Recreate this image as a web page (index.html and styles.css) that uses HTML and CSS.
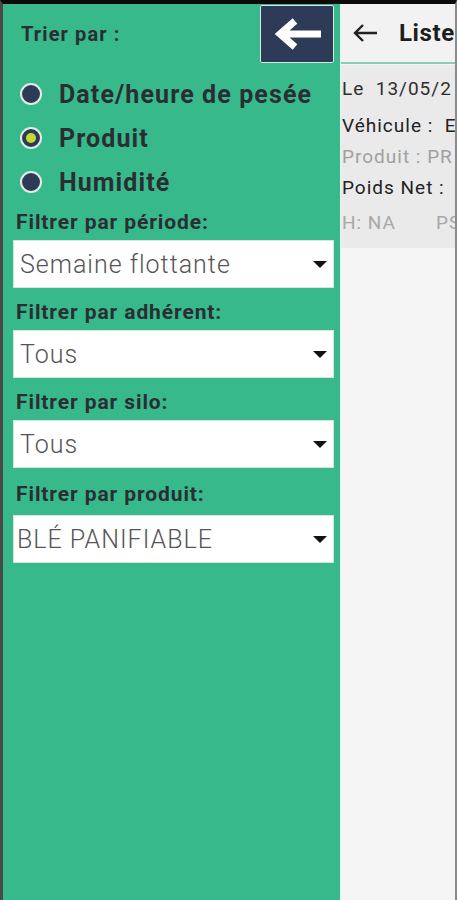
FILE: index.html
```html
<!DOCTYPE html>
<html lang="fr">
<head>
<meta charset="utf-8">
<link rel="stylesheet" href="styles.css">
</head>
<body>
<div class="frame">
  <aside class="panel">
    <div class="panel-top">
      <span class="sort-title">Trier par :</span>
      <button class="back-btn" aria-label="Retour">
        <svg width="52" height="32" viewBox="0 0 52 32"><path d="M50 16 H10 M24 3 L9 16 L24 29" fill="none" stroke="#fff" stroke-width="7" stroke-linejoin="miter"/></svg>
      </button>
    </div>
    <ul class="radios">
      <li class="radio-row"><span class="radio"></span><span class="radio-label">Date/heure de pesée</span></li>
      <li class="radio-row"><span class="radio checked"></span><span class="radio-label">Produit</span></li>
      <li class="radio-row"><span class="radio"></span><span class="radio-label">Humidité</span></li>
    </ul>
    <div class="filter">
      <div class="filter-label">Filtrer par période:</div>
      <div class="select"><span class="select-text">Semaine flottante</span><span class="caret"></span></div>
    </div>
    <div class="filter">
      <div class="filter-label">Filtrer par adhérent:</div>
      <div class="select"><span class="select-text">Tous</span><span class="caret"></span></div>
    </div>
    <div class="filter">
      <div class="filter-label">Filtrer par silo:</div>
      <div class="select"><span class="select-text">Tous</span><span class="caret"></span></div>
    </div>
    <div class="filter">
      <div class="filter-label">Filtrer par produit:</div>
      <div class="select"><span class="select-text prod">BLÉ PANIFIABLE</span><span class="caret"></span></div>
    </div>
  </aside>
  <main class="main">
    <header class="main-head">
      <svg class="head-arrow" width="26" height="20" viewBox="0 0 26 20"><path d="M25 10 H3 M11 2 L3 10 L11 18" fill="none" stroke="#222" stroke-width="2.4"/></svg>
      <span class="head-title">Liste</span>
    </header>
    <section class="card">
      <div class="line l1">Le&nbsp; 13/05/2</div>
      <div class="line l2">Véhicule :&nbsp; E</div>
      <div class="line l3">Produit : PR</div>
      <div class="line l4">Poids Net :</div>
      <div class="line l5">H: NA&nbsp;&nbsp;&nbsp;&nbsp;&nbsp;&nbsp; PS</div>
    </section>
  </main>
</div>
</body>
</html>
```
FILE: styles.css
```css
* { box-sizing: border-box; }
html, body { margin: 0; padding: 0; }
body {
  width: 457px;
  height: 900px;
  overflow: hidden;
  font-family: Roboto, "Liberation Sans", sans-serif;
  background: #f5f5f5;
}
.frame {
  display: flex;
  height: 900px;
  border-top: 4px solid #0a0a0a;
  border-left: 3px solid #4a4a4a;
  border-right: 2px solid #8a8a8a;
}
.panel {
  width: 337px;
  flex: none;
  background: #38b98c;
  padding: 0 6px 0 10px;
}
.panel-top {
  display: flex;
  align-items: center;
  justify-content: space-between;
  height: 59px;
  padding-top: 1px;
}
.sort-title {
  font-weight: 700;
  font-size: 20px;
  letter-spacing: 1.1px;
  color: #2a2e33;
  margin-left: 8px;
}
.back-btn {
  width: 74px;
  height: 58px;
  background: #2d3b58;
  border: 1px solid #d8e8e0;
  border-radius: 2px;
  display: flex;
  align-items: center;
  justify-content: center;
  padding: 0;
  margin-right: 0;
}
.radios {
  list-style: none;
  margin: 9px 0 0;
  padding: 0 0 0 7px;
}
.radio-row {
  display: flex;
  align-items: center;
  height: 44px;
}
.radio {
  width: 22px;
  height: 22px;
  border-radius: 50%;
  background: #2d3b58;
  border: 2px solid #e4ece6;
  display: flex;
  align-items: center;
  justify-content: center;
  margin-right: 17px;
}
.radio.checked::after {
  content: "";
  width: 10px;
  height: 10px;
  border-radius: 50%;
  background: #c5da2e;
}
.radio-label {
  font-size: 25px;
  font-weight: 700;
  letter-spacing: 1.1px;
  color: #2a2e33;
}
.filter-label {
  font-size: 21px;
  font-weight: 700;
  letter-spacing: 0.9px;
  color: #2a2e33;
  line-height: 20px;
  margin: 8px 0 8px 3px;
}
.filter + .filter .filter-label { margin-top: 14px; }
.filter:last-child .filter-label { margin-top: 16px; margin-bottom: 11px; }
.select {
  height: 48px;
  background: #fff;
  border: 1px solid #d6e4dc;
  display: flex;
  align-items: center;
  justify-content: space-between;
  padding: 0 6px 0 6px;
}
.select-text {
  font-size: 25px;
  font-weight: 300;
  letter-spacing: 1px;
  color: #555;
}
.select-text.prod { margin-left: -3px; }
.caret {
  width: 0;
  height: 0;
  border-left: 7px solid transparent;
  border-right: 7px solid transparent;
  border-top: 7px solid #111;
}
.main {
  flex: 1;
  min-width: 0;
  overflow: hidden;
  background: #f5f5f5;
  border-left: 1px solid #e8f2ee;
}
.main-head {
  height: 60px;
  background: #f2f2f2;
  display: flex;
  align-items: center;
  padding-left: 11px;
  border-bottom: 2px solid #86cdb1;
  white-space: nowrap;
}
.head-arrow { flex: none; }
.head-title {
  font-size: 24px;
  font-weight: 700;
  letter-spacing: 0.6px;
  color: #1e1e1e;
  margin-left: 21px;
}
.card {
  background: #eaeaea;
  margin-top: 1px;
  height: 183px;
  padding: 14px 0 0 1px;
  white-space: nowrap;
  font-size: 19px;
  letter-spacing: 1px;
}
.line { line-height: 20px; }
.l1 { color: #2e2e2e; height: 37px; }
.l2 { color: #222; height: 31px; }
.l3 { color: #a0a0a0; height: 31px; }
.l4 { color: #222; height: 35px; }
.l5 { color: #a8a8a8; }
```
